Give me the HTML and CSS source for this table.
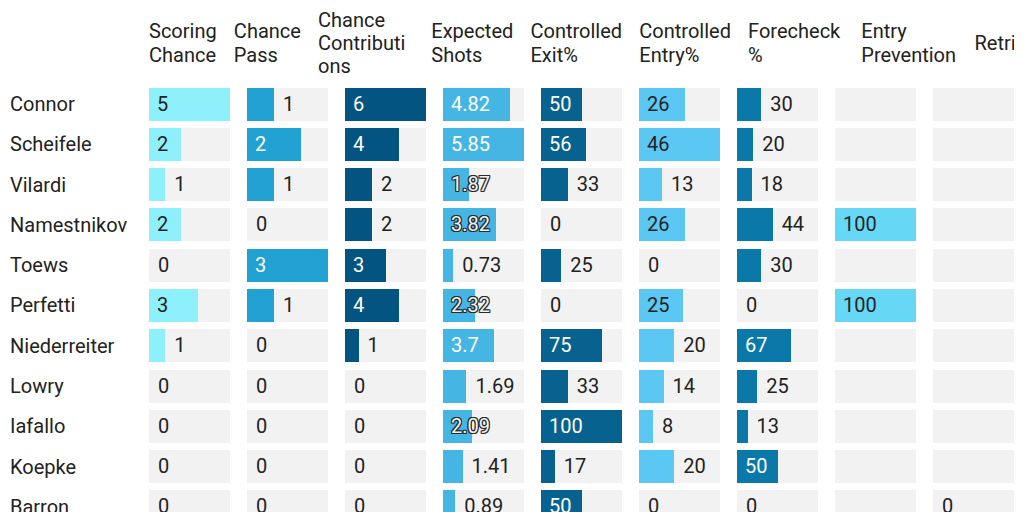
FILE: index.html
```html
<!DOCTYPE html>
<html lang="en">
<head>
<meta charset="utf-8">
<title>Player stats</title>
<link rel="stylesheet" href="styles.css">
</head>
<body>
<div class="sheet">
  <div class="head">
    <div class="h">Scoring<br>Chance</div>
    <div class="h">Chance<br>Pass</div>
    <div class="h brk">Chance Contributions</div>
    <div class="h">Expected<br>Shots</div>
    <div class="h">Controlled<br>Exit%</div>
    <div class="h">Controlled<br>Entry%</div>
    <div class="h">Forecheck %</div>
    <div class="h">Entry Prevention</div>
    <div class="h">Retrievals</div>
  </div>
  <div class="rows">
    <div class="row">
      <div class="name">Connor</div>
      <div class="cell"><div class="bar c1" style="width:100%"><span class="lbl">5</span></div></div>
      <div class="cell"><div class="bar c2" style="width:33.3%"></div><span class="lbl out">1</span></div>
      <div class="cell"><div class="bar c3" style="width:100%"><span class="lbl">6</span></div></div>
      <div class="cell"><div class="bar c4" style="width:82.4%"><span class="lbl">4.82</span></div></div>
      <div class="cell"><div class="bar c5" style="width:50%"><span class="lbl">50</span></div></div>
      <div class="cell"><div class="bar c6" style="width:56.5%"><span class="lbl">26</span></div></div>
      <div class="cell"><div class="bar c7" style="width:30%"></div><span class="lbl out">30</span></div>
      <div class="cell"></div>
      <div class="cell"></div>
    </div>
    <div class="row">
      <div class="name">Scheifele</div>
      <div class="cell"><div class="bar c1" style="width:40%"><span class="lbl">2</span></div></div>
      <div class="cell"><div class="bar c2" style="width:66.7%"><span class="lbl">2</span></div></div>
      <div class="cell"><div class="bar c3" style="width:66.7%"><span class="lbl">4</span></div></div>
      <div class="cell"><div class="bar c4" style="width:100%"><span class="lbl">5.85</span></div></div>
      <div class="cell"><div class="bar c5" style="width:56%"><span class="lbl">56</span></div></div>
      <div class="cell"><div class="bar c6" style="width:100%"><span class="lbl">46</span></div></div>
      <div class="cell"><div class="bar c7" style="width:20%"></div><span class="lbl out">20</span></div>
      <div class="cell"></div>
      <div class="cell"></div>
    </div>
    <div class="row">
      <div class="name">Vilardi</div>
      <div class="cell"><div class="bar c1" style="width:20%"></div><span class="lbl out">1</span></div>
      <div class="cell"><div class="bar c2" style="width:33.3%"></div><span class="lbl out">1</span></div>
      <div class="cell"><div class="bar c3" style="width:33.3%"></div><span class="lbl out">2</span></div>
      <div class="cell"><div class="bar c4" style="width:32%"><span class="lbl ol">1.87</span></div></div>
      <div class="cell"><div class="bar c5" style="width:33%"></div><span class="lbl out">33</span></div>
      <div class="cell"><div class="bar c6" style="width:28.3%"></div><span class="lbl out">13</span></div>
      <div class="cell"><div class="bar c7" style="width:18%"></div><span class="lbl out">18</span></div>
      <div class="cell"></div>
      <div class="cell"></div>
    </div>
    <div class="row">
      <div class="name">Namestnikov</div>
      <div class="cell"><div class="bar c1" style="width:40%"><span class="lbl">2</span></div></div>
      <div class="cell"><span class="lbl out">0</span></div>
      <div class="cell"><div class="bar c3" style="width:33.3%"></div><span class="lbl out">2</span></div>
      <div class="cell"><div class="bar c4" style="width:65.3%"><span class="lbl ol">3.82</span></div></div>
      <div class="cell"><span class="lbl out">0</span></div>
      <div class="cell"><div class="bar c6" style="width:56.5%"><span class="lbl">26</span></div></div>
      <div class="cell"><div class="bar c7" style="width:44%"></div><span class="lbl out">44</span></div>
      <div class="cell"><div class="bar c8" style="width:100%"><span class="lbl">100</span></div></div>
      <div class="cell"></div>
    </div>
    <div class="row">
      <div class="name">Toews</div>
      <div class="cell"><span class="lbl out">0</span></div>
      <div class="cell"><div class="bar c2" style="width:100%"><span class="lbl">3</span></div></div>
      <div class="cell"><div class="bar c3" style="width:50%"><span class="lbl">3</span></div></div>
      <div class="cell"><div class="bar c4" style="width:12.5%"></div><span class="lbl out">0.73</span></div>
      <div class="cell"><div class="bar c5" style="width:25%"></div><span class="lbl out">25</span></div>
      <div class="cell"><span class="lbl out">0</span></div>
      <div class="cell"><div class="bar c7" style="width:30%"></div><span class="lbl out">30</span></div>
      <div class="cell"></div>
      <div class="cell"></div>
    </div>
    <div class="row">
      <div class="name">Perfetti</div>
      <div class="cell"><div class="bar c1" style="width:60%"><span class="lbl">3</span></div></div>
      <div class="cell"><div class="bar c2" style="width:33.3%"></div><span class="lbl out">1</span></div>
      <div class="cell"><div class="bar c3" style="width:66.7%"><span class="lbl">4</span></div></div>
      <div class="cell"><div class="bar c4" style="width:39.7%"><span class="lbl ol">2.32</span></div></div>
      <div class="cell"><span class="lbl out">0</span></div>
      <div class="cell"><div class="bar c6" style="width:54.3%"><span class="lbl">25</span></div></div>
      <div class="cell"><span class="lbl out">0</span></div>
      <div class="cell"><div class="bar c8" style="width:100%"><span class="lbl">100</span></div></div>
      <div class="cell"></div>
    </div>
    <div class="row">
      <div class="name">Niederreiter</div>
      <div class="cell"><div class="bar c1" style="width:20%"></div><span class="lbl out">1</span></div>
      <div class="cell"><span class="lbl out">0</span></div>
      <div class="cell"><div class="bar c3" style="width:16.7%"></div><span class="lbl out">1</span></div>
      <div class="cell"><div class="bar c4" style="width:63.2%"><span class="lbl">3.7</span></div></div>
      <div class="cell"><div class="bar c5" style="width:75%"><span class="lbl">75</span></div></div>
      <div class="cell"><div class="bar c6" style="width:43.5%"></div><span class="lbl out">20</span></div>
      <div class="cell"><div class="bar c7" style="width:67%"><span class="lbl">67</span></div></div>
      <div class="cell"></div>
      <div class="cell"></div>
    </div>
    <div class="row">
      <div class="name">Lowry</div>
      <div class="cell"><span class="lbl out">0</span></div>
      <div class="cell"><span class="lbl out">0</span></div>
      <div class="cell"><span class="lbl out">0</span></div>
      <div class="cell"><div class="bar c4" style="width:28.9%"></div><span class="lbl out">1.69</span></div>
      <div class="cell"><div class="bar c5" style="width:33%"></div><span class="lbl out">33</span></div>
      <div class="cell"><div class="bar c6" style="width:30.4%"></div><span class="lbl out">14</span></div>
      <div class="cell"><div class="bar c7" style="width:25%"></div><span class="lbl out">25</span></div>
      <div class="cell"></div>
      <div class="cell"></div>
    </div>
    <div class="row">
      <div class="name">Iafallo</div>
      <div class="cell"><span class="lbl out">0</span></div>
      <div class="cell"><span class="lbl out">0</span></div>
      <div class="cell"><span class="lbl out">0</span></div>
      <div class="cell"><div class="bar c4" style="width:35.7%"><span class="lbl ol">2.09</span></div></div>
      <div class="cell"><div class="bar c5" style="width:100%"><span class="lbl">100</span></div></div>
      <div class="cell"><div class="bar c6" style="width:17.4%"></div><span class="lbl out">8</span></div>
      <div class="cell"><div class="bar c7" style="width:13%"></div><span class="lbl out">13</span></div>
      <div class="cell"></div>
      <div class="cell"></div>
    </div>
    <div class="row">
      <div class="name">Koepke</div>
      <div class="cell"><span class="lbl out">0</span></div>
      <div class="cell"><span class="lbl out">0</span></div>
      <div class="cell"><span class="lbl out">0</span></div>
      <div class="cell"><div class="bar c4" style="width:24.1%"></div><span class="lbl out">1.41</span></div>
      <div class="cell"><div class="bar c5" style="width:17%"></div><span class="lbl out">17</span></div>
      <div class="cell"><div class="bar c6" style="width:43.5%"></div><span class="lbl out">20</span></div>
      <div class="cell"><div class="bar c7" style="width:50%"><span class="lbl">50</span></div></div>
      <div class="cell"></div>
      <div class="cell"></div>
    </div>
    <div class="row">
      <div class="name">Barron</div>
      <div class="cell"><span class="lbl out">0</span></div>
      <div class="cell"><span class="lbl out">0</span></div>
      <div class="cell"><span class="lbl out">0</span></div>
      <div class="cell"><div class="bar c4" style="width:15.2%"></div><span class="lbl out">0.89</span></div>
      <div class="cell"><div class="bar c5" style="width:50%"><span class="lbl">50</span></div></div>
      <div class="cell"><span class="lbl out">0</span></div>
      <div class="cell"><span class="lbl out">0</span></div>
      <div class="cell"></div>
      <div class="cell"><span class="lbl out">0</span></div>
    </div>
  </div>
</div>
</body>
</html>
```
FILE: styles.css
```css
html, body {
  margin: 0;
  padding: 0;
  background: #ffffff;
}

body {
  font-family: Roboto, "Liberation Sans", sans-serif;
  font-size: 20px;
  color: #222222;
}

.sheet {
  width: 1014px;
  height: 512px;
  overflow: hidden;
}

.head {
  display: flex;
  align-items: center;
  gap: 17.2px;
  height: 87.5px;
  padding-left: 149px;
  line-height: 1.172;
  white-space: nowrap;
}

.h {
  flex: none;
  max-width: 96px;
  white-space: normal;
}

.h.brk {
  overflow-wrap: break-word;
}

.rows {
  display: flex;
  flex-direction: column;
  gap: 7.3px;
}

.row {
  display: grid;
  grid-template-columns: 132px repeat(9, 81px);
  column-gap: 17px;
  align-items: center;
  height: 33px;
}

.name {
  padding-left: 10px;
  white-space: nowrap;
}

.cell {
  display: flex;
  align-items: center;
  height: 33px;
  background: #f2f2f2;
}

.bar {
  flex: none;
  display: flex;
  align-items: center;
  height: 100%;
}

.lbl {
  white-space: nowrap;
  padding-left: 8px;
  color: #ffffff;
  line-height: 33px;
}

.lbl.out {
  padding-left: 9px;
  color: #222222;
}

.c1 { background: #8df0fb; }
.c2 { background: #22a1d3; }
.c3 { background: #035480; }
.c4 { background: #45b6e3; }
.c5 { background: #08628f; }
.c6 { background: #5bc8f4; }
.c7 { background: #0a79aa; }
.c8 { background: #66d8f6; }

.c1 .lbl, .c6 .lbl, .c8 .lbl {
  color: #222222;
}

.lbl.ol {
  color: #f2f2f2;
  text-shadow:
    -1px -1px 0 #2a2a2a,
    1px -1px 0 #2a2a2a,
    -1px 1px 0 #2a2a2a,
    1px 1px 0 #2a2a2a,
    0 -1px 0 #2a2a2a,
    0 1px 0 #2a2a2a,
    -1px 0 0 #2a2a2a,
    1px 0 0 #2a2a2a;
}
```
